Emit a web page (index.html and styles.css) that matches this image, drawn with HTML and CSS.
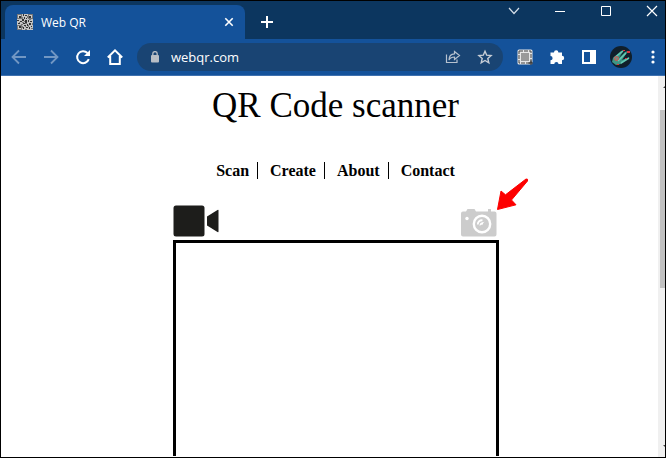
FILE: index.html
```html
<!DOCTYPE html>
<html lang="en">
<head>
<meta charset="utf-8">
<title>Web QR</title>
<link rel="stylesheet" href="styles.css">
</head>
<body>
<div class="window">
  <header class="tabstrip">
    <div class="tab">
      <svg class="favicon" width="16" height="16" viewBox="0 0 16 16" shape-rendering="crispEdges">
        <rect width="16" height="16" fill="#c4c4c4"/>
        <path d="M0 0h5v5H0zM11 0h5v5h-5zM0 11h5v5H0z" fill="#777"/>
        <path d="M1 1h3v3H1zM12 1h3v3h-3zM1 12h3v3H1z" fill="#ccc"/>
        <path d="M2 2h2v2H2zM12 2h2v2h-2zM2 12h2v2H2zM6 0h1v2H6zM8 1h2v1H8zM7 3h1v2H7zM9 4h1v1H9zM0 6h2v1H0zM3 7h2v1H3zM1 9h2v1H1zM5 5h2v2H5zM8 6h2v3H8zM6 9h2v1H6zM11 6h1v2h-1zM13 7h2v1h-2zM12 9h2v2h-2zM10 10h1v2h-1zM7 11h2v1H7zM6 13h1v2H6zM9 13h2v1H9zM12 13h1v2h-1zM14 12h1v1h-1z" fill="#333"/>
        <path d="M5 3h1v2H5zM10 2h1v2h-1zM5 8h2v1H5zM7 7h1v1H7zM12 5h2v1h-2zM15 9h1v2h-1zM5 12h1v2H5zM8 12h1v1H8zM11 11h1v2h-1zM2 8h1v1H2zM4 10h2v1H4zM8 9h2v1H8zM8 15h2v1H8zM14 14h2v1h-2z" fill="#777"/>
      </svg>
      <span class="tab-title">Web QR</span>
      <button class="icon" aria-label="Close tab"><svg width="10" height="10" viewBox="0 0 10 10"><path d="M1.300 1.300l7.400 7.400M8.700 1.300L1.300 8.700" stroke="#fff" stroke-width="1.600"/></svg></button>
    </div>
    <button class="icon new-tab" aria-label="New tab"><svg width="12" height="12" viewBox="0 0 12 12"><path d="M6 0v12M0 6h12" stroke="#fff" stroke-width="2"/></svg></button>
    <div class="window-controls">
      <button class="icon" aria-label="Search tabs"><svg width="12" height="12" viewBox="0 0 12 12"><path d="M1 3l5 5.500L11 3" fill="none" stroke="#d5dee8" stroke-width="1.200"/></svg></button>
      <button class="icon" aria-label="Minimize"><svg width="12" height="12" viewBox="0 0 12 12"><path d="M1 6.500h10" stroke="#fff"/></svg></button>
      <button class="icon" aria-label="Maximize"><svg width="12" height="12" viewBox="0 0 12 12"><path d="M1.500 1.500h9v9h-9z" fill="none" stroke="#fff"/></svg></button>
      <button class="icon" aria-label="Close"><svg width="12" height="12" viewBox="0 0 12 12"><path d="M1 1l10 10M11 1L1 11" stroke="#fff" stroke-width="1.200"/></svg></button>
    </div>
  </header>
  <div class="toolbar">
    <nav class="history">
      <button class="icon" aria-label="Back"><svg width="16" height="16" viewBox="0 0 16 16"><path d="M15 8H2M8 1.500L1.500 8 8 14.500" fill="none" stroke="#7297c3" stroke-width="1.800"/></svg></button>
      <button class="icon" aria-label="Forward"><svg width="16" height="16" viewBox="0 0 16 16"><path d="M1 8h13M8 1.500L14.500 8 8 14.500" fill="none" stroke="#7297c3" stroke-width="1.800"/></svg></button>
      <button class="icon" aria-label="Reload"><svg width="16" height="16" viewBox="0 0 16 16"><path d="M13.800 10.200A6 6 0 1 1 12.500 4" fill="none" stroke="#fff" stroke-width="2"/><path d="M15 1v6H9z" fill="#fff"/></svg></button>
      <button class="icon" aria-label="Home"><svg width="16" height="16" viewBox="0 0 16 16"><path d="M.8 8.500L8 1.400l7.200 7.100M3.200 7v8h9.600V7" fill="none" stroke="#fff" stroke-width="2"/></svg></button>
    </nav>
    <div class="omnibox">
      <svg width="10" height="12" viewBox="0 0 10 12"><rect x="1" y="4" width="8" height="7.500" rx="1" fill="#b8bec5"/><path d="M2.800 5V2.800a2.200 2.200 0 0 1 4.400 0V5" fill="none" stroke="#b8bec5" stroke-width="1.300"/></svg>
      <input class="url" type="text" value="webqr.com" aria-label="Address">
      <button class="icon" aria-label="Share"><svg width="16" height="16" viewBox="0 0 16 16"><path d="M1.500 5.500v8h10.500v-3M9.500 2.500L14.500 6.500l-5 4V8C6.500 8 5 9 4 11c0-3.500 2-6 5.500-6.200z" fill="none" stroke="#b7c2cf" stroke-width="1.200"/></svg></button>
      <button class="icon" aria-label="Bookmark"><svg width="16" height="16" viewBox="0 0 16 16"><path d="M8 2.200l1.700 4 4.400.4-3.300 2.900 1 4.300L8 11.500l-3.800 2.300 1-4.300-3.300-2.900 4.400-.4z" fill="none" stroke="#c8ced6" stroke-width="1.400"/></svg></button>
    </div>
    <div class="extensions">
      <button class="icon" aria-label="Capture"><svg width="16" height="16" viewBox="0 0 16 16"><rect x=".5" y=".5" width="15" height="15" rx="1.500" fill="#e6e6e6"/><rect x="2" y="2" width="12" height="12" fill="none" stroke="#444" stroke-dasharray="4 1"/><rect x="4" y="4" width="8" height="8" fill="#999"/><path d="M14 11.500V16M11.500 14H16" stroke="#222"/></svg></button>
      <button class="icon" aria-label="Extensions"><svg width="16" height="16" viewBox="0 0 16 16"><path d="M1.500 3.500h3.500a2.200 2.200 0 1 1 4.400 0H13v3.300a2.200 2.200 0 1 1 0 4.400V15H9.500a2.100 2.100 0 0 0-4.200 0H1.500v-3.700a2.100 2.100 0 0 0 0-4.200z" fill="#fff"/></svg></button>
      <button class="icon" aria-label="Side panel"><svg width="16" height="16" viewBox="0 0 16 16"><path fill="#fff" fill-rule="evenodd" d="M1 1h14v14H1zM3 3v10h6V3z"/></svg></button>
      <button class="icon profile" aria-label="Profile"><svg width="22" height="22" viewBox="0 0 22 22"><circle cx="11" cy="11" r="11" fill="#101f2b"/><path d="M3 12l8-7 3-1-5 8 6-6 3-1-6 9 8-3-9 7-5 1-4-3z" fill="#3f9585"/><path d="M4 12l9-7M8 15l8-8M11 17l8-5" stroke="#63c9b3" stroke-width="1.500"/><circle cx="6.500" cy="12.500" r="2" fill="#7a8a80" stroke="#d0554f"/><path d="M13 4h2v1h-2zM17 5h3v2h-3zM7 18h2v1H7zM15 12h2v1h-2z" fill="#dd343d"/></svg></button>
      <button class="icon" aria-label="Menu"><svg width="4" height="14" viewBox="0 0 4 14"><circle cx="2" cy="2" r="1.600" fill="#fff"/><circle cx="2" cy="7" r="1.600" fill="#fff"/><circle cx="2" cy="12" r="1.600" fill="#fff"/></svg></button>
    </div>
  </div>
  <div class="viewport">
    <main class="page">
      <h1>QR Code scanner</h1>
      <nav class="menu">
        <a href="#scan">Scan</a><a href="#create">Create</a><a href="#about">About</a><a href="#contact">Contact</a>
      </nav>
      <section class="scanner">
        <div class="modes">
          <button class="icon" aria-label="Use camera"><svg width="46" height="32" viewBox="0 0 46 32"><rect x=".5" y=".5" width="31" height="31" rx="2.500" fill="#1d1d1b"/><path d="M34 11.500L44.500 5q1-.5 1 .5v21q0 1-1 .5L34 20.500z" fill="#1d1d1b"/></svg></button>
          <button class="icon photo" aria-label="Use photo"><svg width="36" height="28" viewBox="0 0 36 28"><path d="M2 2.500h3L6.500 0h7L15 2.500h12V0h3v2.500h3.500q2 0 2 2v21q0 2-2 2H2q-2 0-2-2v-21q0-2 2-2z" fill="#ccc"/><circle cx="6" cy="9.500" r="1.700" fill="#fff"/><circle cx="21" cy="15" r="8.200" fill="none" stroke="#fff" stroke-width="2.400"/><path d="M16.800 15.500a4 4 0 0 1 4.700-4.200" fill="none" stroke="#fff" stroke-width="1.800"/><path d="M18.600 17q-.5-4 5-4.300-2.200 1.300-1.600 2.800-2-.4-3.400 1.500z" fill="#fff"/></svg>
            <svg class="pointer" width="32" height="32" viewBox="0 0 32 32"><path d="M.5 31.500L4 13l4.500 3.800L29 1q2.300-.5 1.500 2L14.500 22l4.500 4.800z" fill="#fd0000" stroke="#fd0000" stroke-linejoin="round"/></svg></button>
        </div>
        <div class="preview"></div>
      </section>
    </main>
    <div class="scrollbar">
      <svg width="7" height="4" viewBox="0 0 7 4"><path d="M5 4l2-2v2z" fill="#444"/></svg>
      <div class="track"><div class="thumb"></div></div>
      <svg width="7" height="4" viewBox="0 0 7 4"><path d="M5 0h2v2z" fill="#444"/></svg>
    </div>
  </div>
</div>
</body>
</html>
```
FILE: styles.css
```css
* { box-sizing: border-box; }
body { margin: 0; }
.window {
  height: 100vh;
  display: flex;
  flex-direction: column;
  border: 1px solid #000;
  background: #fff;
  overflow: hidden;
}
.icon {
  display: flex;
  align-items: center;
  justify-content: center;
  flex: none;
  padding: 0;
  border: 0;
  background: none;
}
svg { display: block; flex: none; }
.tabstrip {
  display: flex;
  align-items: flex-start;
  padding: 4px 7px 0 4px;
  height: 38px;
  flex: none;
  background: #0c365f;
}
.tab {
  display: flex;
  align-items: center;
  gap: 8px;
  width: 240px;
  height: 34px;
  padding: 0 11px 0 12px;
  border-radius: 8px 8px 0 0;
  background: #14529a;
}
.tab-title {
  flex: 1;
  color: #fff;
  font: 12px "Open Sans", sans-serif;
}
.new-tab { margin: 11px 0 0 16px; }
.window-controls {
  display: flex;
  gap: 34px;
  margin-left: auto;
}
.toolbar {
  display: flex;
  align-items: center;
  flex: none;
  height: 37px;
  padding: 0 10px;
  background: #14529a;
  border-bottom: 1px solid #3f71af;
}
.history { display: flex; gap: 16px; }
.omnibox {
  display: flex;
  align-items: center;
  flex: 1;
  min-width: 0;
  gap: 16px;
  height: 28px;
  margin: 0 14px;
  padding: 0 10px 0 13px;
  border-radius: 14px;
  background: #194473;
}
.url {
  flex: 1;
  min-width: 0;
  padding: 0;
  margin-left: -5px;
  border: 0;
  outline: 0;
  background: none;
  color: #fff;
  font: 13px "Open Sans", sans-serif;
}
.extensions { display: flex; align-items: center; gap: 16px; }
.profile { margin: 0 3px 0 -3px; }
.viewport { display: flex; flex: 1; min-height: 0; }
.page {
  display: flex;
  flex-direction: column;
  align-items: center;
  flex: 1;
  padding: 10px 0 1px 12px;
  font-family: "Liberation Serif", serif;
}
h1 { margin: 0; font-size: 35px; font-weight: 400; line-height: 40px; }
.menu { display: flex; margin-top: 36px; line-height: 17px; }
.menu a {
  padding: 0 8px 0 12px;
  color: #000;
  font-size: 16px;
  font-weight: 700;
  text-decoration: none;
}
.menu a + a { border-left: 1px solid #000; }
.menu a:last-child { padding-right: 12px; }
.scanner {
  display: flex;
  flex-direction: column;
  flex: 1;
  width: 50%;
  min-width: 326px;
  margin-top: 26px;
}
.modes {
  display: flex;
  justify-content: space-between;
  align-items: flex-end;
  padding: 0 2px 3px 0;
}
.photo { position: relative; }
.pointer { position: absolute; left: 36px; bottom: 27px; }
.preview { flex: 1; border: 3px solid #000; border-bottom: 0; }
.scrollbar {
  display: flex;
  flex-direction: column;
  justify-content: space-between;
  width: 7px;
  padding: 8px 0;
  background: #f0f0f0;
}
.track { flex: 1; padding: 22px 0 0 2px; }
.thumb { height: 53%; background: #c1c1c1; }
```
